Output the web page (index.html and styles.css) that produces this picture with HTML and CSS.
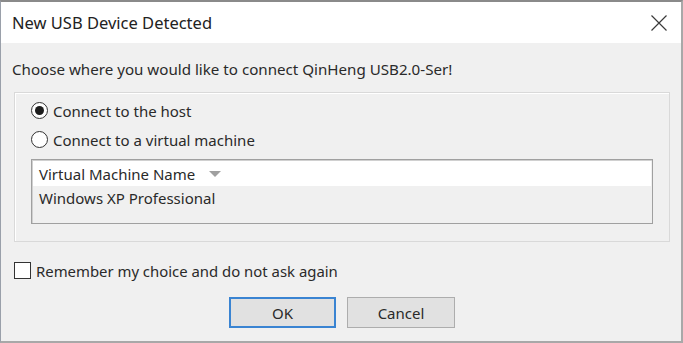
FILE: index.html
```html
<!DOCTYPE html>
<html>
<head>
<meta charset="utf-8">
<link rel="stylesheet" href="styles.css">
</head>
<body>
<div class="dialog">
  <div class="titlebar">
    <span class="title">New USB Device Detected</span>
    <svg class="close" width="16" height="16" viewBox="0 0 16 16"><path d="M0.5 0.5 L15.5 15.5 M15.5 0.5 L0.5 15.5" stroke="#3a3a3a" stroke-width="1.2" fill="none"/></svg>
  </div>
  <div class="content">
    <div class="intro">Choose where you would like to connect QinHeng USB2.0-Ser!</div>
    <div class="group">
      <div class="radio-row"><span class="radio checked"></span><span class="label">Connect to the host</span></div>
      <div class="radio-row"><span class="radio"></span><span class="label">Connect to a virtual machine</span></div>
      <div class="list">
        <div class="list-header"><span>Virtual Machine Name</span><span class="sort"></span></div>
        <div class="list-row">Windows XP Professional</div>
      </div>
    </div>
    <div class="check-row"><span class="checkbox"></span><span class="label">Remember my choice and do not ask again</span></div>
    <div class="buttons">
      <div class="btn default">OK</div>
      <div class="btn">Cancel</div>
    </div>
  </div>
</div>
</body>
</html>
```
FILE: styles.css
```css
* { box-sizing: border-box; }
html, body { margin: 0; padding: 0; }
body {
  width: 683px;
  height: 343px;
  overflow: hidden;
  background: #f0f0f0;
  font-family: "Noto Sans", "Open Sans", sans-serif;
  color: #2a2a2a;
}
.dialog {
  width: 683px;
  height: 343px;
  border-top: 2px solid #8a8a8a;
  border-left: 1px solid #9aa0aa;
  border-right: 2px solid #a8a8a8;
  border-bottom: 2px solid #a8a8a8;
  background: #f0f0f0;
  display: flex;
  flex-direction: column;
}
.titlebar {
  height: 41px;
  background: #fff;
  display: flex;
  align-items: center;
  justify-content: space-between;
  padding-left: 11px;
  padding-right: 14px;
  flex: none;
}
.title {
  font-size: 16.5px;
  color: #222;
}
.close { display: block; }
.content {
  flex: 1;
  display: flex;
  flex-direction: column;
}
.intro {
  margin-top: 16px;
  margin-left: 11px;
  height: 20px;
  line-height: 20px;
  font-size: 15.15px;
}
.group {
  margin-top: 13px;
  margin-left: 13px;
  width: 656px;
  height: 150px;
  border: 1px solid #d9d9d9;
  box-shadow: inset 1px 1px 0 #fff;
  padding: 3px 16px 0 16px;
  display: flex;
  flex-direction: column;
}
.radio-row {
  height: 29px;
  display: flex;
  align-items: center;
  font-size: 15px;
}
.radio {
  width: 17px;
  height: 17px;
  border-radius: 50%;
  border: 1px solid #333;
  background: #fff;
  margin-right: 5px;
  display: flex;
  align-items: center;
  justify-content: center;
  flex: none;
}
.radio.checked::after {
  content: "";
  width: 9px;
  height: 9px;
  border-radius: 50%;
  background: #1e1e1e;
}
.list {
  margin-top: 5px;
  height: 65px;
  border: 1px solid #a0a0a0;
  box-shadow: inset 1px 1px 0 #d0d0d0;
  background: #f0f0f0;
  font-size: 15px;
}
.list-header {
  height: 25px;
  margin: 1px 1px 0 1px;
  background: #fff;
  display: flex;
  align-items: center;
  padding-left: 6px;
}
.sort {
  width: 0;
  height: 0;
  border-left: 6.5px solid transparent;
  border-right: 6.5px solid transparent;
  border-top: 6px solid #a0a0a0;
  margin-left: 14px;
}
.list-row {
  height: 24px;
  line-height: 24px;
  padding-left: 7px;
}
.check-row {
  margin-top: 20px;
  margin-left: 13px;
  height: 17px;
  display: flex;
  align-items: center;
  font-size: 14.9px;
}
.checkbox {
  width: 17px;
  height: 17px;
  border: 1px solid #333;
  background: #fff;
  margin-right: 5px;
  flex: none;
}
.buttons {
  margin-top: 18px;
  display: flex;
  justify-content: center;
  gap: 11px;
  padding-left: 2px;
}
.btn {
  width: 108px;
  height: 31px;
  background: #e1e1e1;
  border: 1px solid #adadad;
  display: flex;
  align-items: center;
  justify-content: center;
  font-size: 15px;
}
.btn.default {
  width: 107px;
  border: 2px solid #3a84d2;
}
```
